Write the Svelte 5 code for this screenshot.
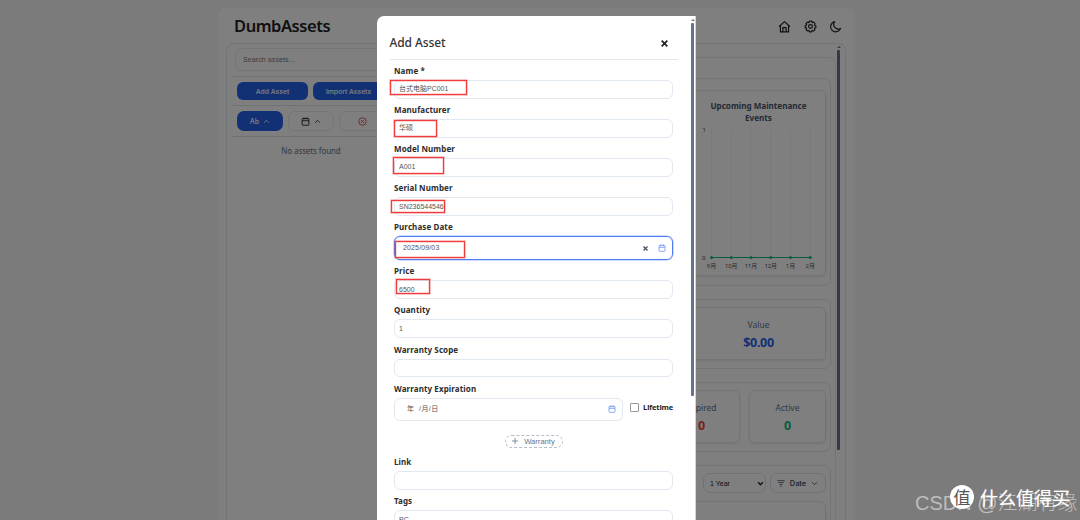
<script>
    const fields = [
        { label: 'Name *', value: '台式电脑PC001' },
        { label: 'Manufacturer', value: '华硕' },
        { label: 'Model Number', value: 'A001' },
        { label: 'Serial Number', value: 'SN236544546' },
        { label: 'Purchase Date', value: '2025/09/03', date: true },
        { label: 'Price', value: '6500' },
        { label: 'Quantity', value: '1' },
        { label: 'Warranty Scope', value: '' },
    ];

    // highlight frames lying over the form
    const marks = [
        [389.5, 80, 77.5, 15],
        [394, 120, 43, 16.5],
        [392.5, 156.5, 51.5, 17],
        [391, 200, 53.5, 13],
        [394.5, 240.5, 70.5, 17],
        [396, 279, 33.5, 15],
    ];

    const months = ['9月', '10月', '11月', '12月', '1月', '2月'];
    const chartX = (i) => 19.5 + i * 19.75;
</script>

{#snippet calendar(size)}
    <svg width={size} height={size} viewBox="0 0 24 24" fill="none" stroke="currentColor" stroke-width="2.4" stroke-linejoin="round">
        <rect x="3" y="4" width="18" height="18" rx="2" />
        <path d="M3 10h18M8 1v6M16 1v6" />
    </svg>
{/snippet}

{#snippet chevron(d, weight = 3)}
    <svg width="7" height="7" viewBox="0 0 24 24" fill="none" stroke="currentColor" stroke-width={weight}><path {d} /></svg>
{/snippet}

<div class="page">
    <div class="app">
        <header>
            <h1>DumbAssets</h1>
            <nav>
                <svg width="13" height="13" viewBox="0 0 24 24" fill="none" stroke="currentColor" stroke-width="2.2" stroke-linejoin="round">
                    <path d="M2 12 12 3l10 9M4.500 10v12h15V10M9 22v-8h6v8" />
                </svg>
                <svg width="13" height="13" viewBox="0 0 24 24" fill="none" stroke="currentColor" stroke-width="2.2" stroke-linejoin="round">
                    <path d="M10 2h4l1 2.600 2.700-.8 2.600 2.900-1 2.500L22 11v3l-2.600 1.300.8 2.700-2.900 2.500-2.500-1L13.500 22h-3l-1.300-2.500-2.700.8-2.700-2.700 1-2.600L2 13.500v-3l2.800-1.300-.9-2.800 2.700-2.600L9 4.800z" />
                    <circle cx="12" cy="12" r="3.500" />
                </svg>
                <svg width="13" height="13" viewBox="0 0 24 24" fill="none" stroke="currentColor" stroke-width="2.2" stroke-linejoin="round">
                    <path d="M10.500 3A9.500 9.500 0 1 0 21.500 15.500 8.500 8.500 0 0 1 10.500 3z" />
                </svg>
            </nav>
        </header>
        <div class="container">
            <aside>
                <div class="searchRow"><div class="search">Search assets...</div></div>
                <div class="buttons">
                    <button class="primary">Add Asset</button>
                    <button class="primary">Import Assets</button>
                </div>
                <div class="sorts">
                    <button class="sort active">Ab {@render chevron('M4 16l8-8 8 8')}</button>
                    <button class="sort">{@render calendar(9)} {@render chevron('M4 16l8-8 8 8')}</button>
                    <button class="sort warn">
                        <svg width="9" height="9" viewBox="0 0 24 24" fill="none" stroke="currentColor" stroke-width="2.400"><circle cx="12" cy="12" r="10" /><path d="M8 8l8 8M16 8l-8 8" /></svg>
                    </button>
                </div>
                <p class="empty">No assets found</p>
            </aside>
            <main>
                <div class="dashboard">
                    <section class="panel charts">
                        <div class="card chart">
                            <h3>Upcoming Maintenance Events</h3>
                            <svg width="133" height="146" viewBox="0 0 133 146">
                                {#each months as month, i}
                                    <path d="M{chartX(i)} 6V134" stroke="#f2f2f2" />
                                    <text x={chartX(i)} y="144" text-anchor="middle">{month}</text>
                                {/each}
                                <path d="M19 133.500H119" stroke="#10b981" stroke-width="1" />
                                {#each months as _, i}
                                    <circle cx={chartX(i)} cy="133.500" r="1.500" fill="#10b981" />
                                {/each}
                                <text x="10.500" y="8">1</text>
                                <text x="10" y="135.500">0</text>
                            </svg>
                        </div>
                    </section>
                    <section class="panel value">
                        <div class="card stat"><span>Value</span><b class="blue">$0.00</b></div>
                    </section>
                    <section class="panel status">
                        <div class="card stat"><span>Expired</span><b class="red">0</b></div>
                        <div class="card stat"><span>Active</span><b class="green">0</b></div>
                    </section>
                    <section class="panel events">
                        <div class="filters">
                            <div class="select">1 Year {@render chevron('M4 8l8 8 8-8', 5)}</div>
                            <div class="select date">
                                <svg width="8" height="8" viewBox="0 0 24 24" stroke="currentColor" stroke-width="2.500"><path d="M1 5h22M4 11h16M8 17h8M10 22h4" /></svg>
                                <strong>Date</strong>
                                {@render chevron('M4 8l8 8 8-8')}
                            </div>
                        </div>
                        <div class="card list"></div>
                    </section>
                </div>
                <div class="scroll"><i></i><b></b></div>
            </main>
        </div>
    </div>

    <div class="overlay"></div>

    <div class="modal">
        <div class="content">
            <div class="modalHead">
                <h2>Add Asset</h2>
                <svg width="7" height="7" viewBox="0 0 7 7" stroke="#222" stroke-width="1.700"><path d="M.7.7l5.600 5.600M6.300.7L.7 6.300" /></svg>
            </div>
            <form>
                {#each fields as field}
                    <div class="field" class:purchase={field.date}>
                        <span class="label">{field.label}</span>
                        <div class="input">
                            <span>{field.value}</span>
                            {#if field.date}
                                <span class="tools">
                                    <svg width="5" height="5" viewBox="0 0 7 7" stroke="#475569" stroke-width="1.900"><path d="M.7.7l5.600 5.600M6.300.7L.7 6.300" /></svg>
                                    {@render calendar(8)}
                                </span>
                            {/if}
                        </div>
                    </div>
                {/each}
                <div class="field expiration">
                    <span class="label">Warranty Expiration</span>
                    <div class="row">
                        <div class="input"><span>年&nbsp; /月/日</span><span class="tools">{@render calendar(8)}</span></div>
                        <div class="lifetime"><i></i>Lifetime</div>
                    </div>
                </div>
                <div class="add"><button><svg width="6" height="6" viewBox="0 0 6 6" stroke="currentColor" stroke-width=".8"><path d="M3 0v6M0 3h6" /></svg>Warranty</button></div>
                <div class="field"><span class="label">Link</span><div class="input"></div></div>
                <div class="field"><span class="label">Tags</span><div class="input"><span>PC</span></div></div>
            </form>
        </div>
        <div class="modalScroll"><i></i><b></b></div>
    </div>

    {#each marks as [x, y, w, h]}
        <div class="mark" style="left: {x}px; top: {y}px; width: {w}px; height: {h}px"></div>
    {/each}

    <div class="csdn">CSDN @江湖有缘</div>
    <div class="brand"><span class="logo">值</span><span>什么值得买</span></div>
</div>

<style>
    :global(body) {
        overflow: hidden;
    }

    .page {
        position: relative;
        width: 1080px;
        height: 520px;
        overflow: hidden;
        background: #f6f6f6;
        font-family: 'Noto Sans', 'Noto Sans CJK SC', sans-serif;
        color: #222;
    }

    .page * {
        box-sizing: border-box;
    }

    .app {
        width: 637px;
        height: 540px;
        margin: 8px 0 0 218px;
        padding: 0 8px;
        background: white;
        border-radius: 8px;
    }

    header {
        height: 35px;
        padding: 0 5px 0 8px;
        display: flex;
        justify-content: space-between;
        align-items: center;
    }

    h1 {
        margin: 0;
        font-size: 16.5px;
        font-weight: 600;
        letter-spacing: -0.45px;
    }

    nav {
        display: flex;
        gap: 12.5px;
        padding-top: 2px;
    }

    svg {
        display: block;
        flex: none;
    }

    .container {
        display: flex;
        width: 620px;
        height: 500px;
        border: 1px solid #e2e8f0;
        border-radius: 8px;
    }

    aside {
        width: 170px;
        padding: 0 5px;
        flex: none;
        overflow: hidden;
        font-family: Inter, sans-serif;
    }

    .searchRow {
        height: 33px;
        padding: 4px 0 0 3px;
        border-bottom: 1px solid #dfe3e8;
    }

    .search {
        width: 200px;
        height: 23px;
        padding-left: 7px;
        border: 1px solid #e7eaf0;
        border-radius: 7px;
        font-family: 'Liberation Sans', sans-serif;
        font-size: 7px;
        line-height: 21px;
        letter-spacing: 0.1px;
        color: #777;
    }

    .buttons,
    .sorts {
        display: flex;
        gap: 5px;
        padding: 5px 0 0 5px;
        height: 29px;
        border-bottom: 1px solid #dfe3e8;
    }

    button {
        flex: none;
        padding: 0;
        border: 0;
        font-family: Inter, sans-serif;
    }

    .primary {
        width: 71px;
        height: 18px;
        border-radius: 6px;
        background: #2563eb;
        color: white;
        font-size: 6.8px;
        font-weight: 500;
    }

    .sorts {
        height: 31px;
    }

    .sort {
        display: flex;
        align-items: center;
        justify-content: center;
        gap: 4px;
        width: 46px;
        height: 20px;
        border: 1px solid #e7eaf0;
        border-radius: 7px;
        background: white;
        color: #222;
        font-size: 7px;
        font-weight: 500;
    }

    .active {
        border: 0;
        background: #2563eb;
        color: white;
    }

    .warn {
        color: #ef4444;
    }

    .empty {
        margin: 8px 0 0 -2px;
        text-align: center;
        font-family: 'Noto Sans', sans-serif;
        font-size: 8px;
        line-height: 12px;
        letter-spacing: -0.1px;
        color: #64748b;
    }

    main {
        display: flex;
        flex: 1;
        padding-top: 2px;
    }

    .dashboard {
        width: 439px;
        height: 490px;
        margin-top: 11px;
        padding: 20px 4px 0 5px;
        border: 1px solid #e7eaf0;
        border-radius: 7px;
    }

    .panel {
        display: flex;
        justify-content: flex-end;
        gap: 9px;
        margin-bottom: 13px;
        padding: 11px 4px 0;
        border: 1px solid #e2e8f0;
        border-radius: 7px;
    }

    .card {
        border: 1px solid #e2e8f0;
        border-radius: 6px;
        box-shadow: 0 1px 3px rgba(0, 0, 0, 0.1);
    }

    .charts {
        height: 208px;
    }

    .chart {
        width: 135px;
        height: 186px;
    }

    h3 {
        height: 24px;
        margin: 9px 15px 0;
        font-size: 8.1px;
        line-height: 12px;
        text-align: center;
        color: #475569;
    }

    .chart text {
        font-family: Roboto, 'Noto Sans CJK SC', sans-serif;
        font-size: 6px;
        fill: #555;
    }

    .value,
    .status {
        height: 70px;
        padding-top: 7px;
    }

    .stat {
        display: flex;
        flex-direction: column;
        align-items: center;
        width: 77px;
        height: 53px;
        padding-top: 11px;
        font-size: 8.5px;
        line-height: 12px;
        color: #64748b;
    }

    .value .stat {
        width: 135px;
    }

    .stat b {
        margin-top: 4px;
        font-size: 12.5px;
        line-height: 16px;
        letter-spacing: -0.3px;
    }

    .blue { color: #2563eb; }
    .red { color: #ef4444; }
    .green { color: #10b981; }

    .events {
        display: block;
        height: 100px;
        padding-top: 7px;
    }

    .filters {
        display: flex;
        justify-content: flex-end;
        gap: 4px;
        margin-bottom: 8px;
    }

    .select {
        display: flex;
        align-items: center;
        justify-content: space-between;
        width: 63px;
        height: 20px;
        padding: 0 1px 0 6px;
        border: 1px solid #dfe3ea;
        border-radius: 7px;
        font-family: 'Liberation Sans', sans-serif;
        font-size: 7px;
    }

    .date {
        width: 56px;
        padding-right: 7px;
        color: #475569;
        font-family: Inter, sans-serif;
        font-size: 7.3px;
    }

    .date strong {
        font-weight: 600;
    }

    .list {
        height: 60px;
    }

    .scroll {
        width: 3px;
        margin-left: 1px;
    }

    .scroll i,
    .modalScroll i {
        display: block;
        width: 0;
        margin-bottom: 2px;
        border: 2px solid transparent;
        border-top: 0;
        border-bottom: 2px solid #64748b;
    }

    .scroll b {
        display: block;
        height: 400px;
        border-radius: 1px;
        background: #64748b;
    }

    .overlay {
        position: absolute;
        inset: 0;
        background: rgba(0, 0, 0, 0.5);
    }

    .modal {
        position: absolute;
        left: 377px;
        top: 16px;
        width: 319px;
        height: 520px;
        display: flex;
        justify-content: space-between;
        background: white;
        border-radius: 7px 0 0 0;
    }

    .content {
        width: 301px;
        padding-left: 12.5px;
    }

    .modalHead {
        display: flex;
        align-items: center;
        justify-content: space-between;
        height: 44px;
        padding: 11px 10px 0 0;
        border-bottom: 1px solid #e2e8f0;
    }

    h2 {
        margin: -2px 0 0;
        font-size: 12px;
        font-weight: 500;
        letter-spacing: -0.1px;
        color: #333;
    }

    form {
        padding: 5px 5px 0 4.5px;
    }

    .field {
        height: 39.1px;
    }

    .label {
        display: block;
        height: 15px;
        font-size: 8px;
        line-height: 12px;
        font-weight: 700;
        letter-spacing: 0.1px;
        color: #2c2c2c;
    }

    .input {
        display: flex;
        align-items: center;
        justify-content: space-between;
        height: 18.5px;
        padding: 0 6px 0 4px;
        border: 1px solid #e2e8f0;
        border-radius: 6px;
        font-family: 'Liberation Sans', 'Noto Sans CJK SC', sans-serif;
        font-size: 7px;
        line-height: 10px;
        color: #555;
    }

    .purchase {
        height: 44px;
    }

    .purchase .input {
        height: 24px;
        padding-left: 8px;
        border: 1.5px solid #4f7df0;
        box-shadow: 0 0 0 0.5px #9ab5f8;
        letter-spacing: 0.14px;
    }

    .tools {
        display: flex;
        align-items: center;
        gap: 10px;
        color: #6d93f4;
    }

    .expiration {
        height: 50px;
    }

    .row {
        display: flex;
        justify-content: space-between;
    }

    .expiration .input {
        width: 229px;
        height: 23px;
        padding-left: 12px;
        letter-spacing: 0.4px;
    }

    .lifetime {
        display: flex;
        align-items: center;
        height: 19px;
        font-size: 7.5px;
        font-weight: 700;
        letter-spacing: -0.15px;
    }

    .lifetime i {
        width: 9px;
        height: 9px;
        margin-right: 4px;
        border: 1px solid #999;
        border-radius: 1px;
    }

    .add {
        height: 24px;
        margin-top: -0.5px;
        text-align: center;
        line-height: 12px;
    }

    .add button {
        display: inline-flex;
        align-items: center;
        justify-content: center;
        gap: 6px;
        width: 58px;
        height: 13px;
        border: 1px dashed #b4bdca;
        border-radius: 7px;
        background: white;
        color: #64748b;
        font-family: 'Liberation Sans', sans-serif;
        font-size: 7.6px;
    }

    .modalScroll {
        width: 5px;
        padding-top: 3px;
        border-right: 1px solid #d5d5d5;
    }

    .modalScroll b {
        display: block;
        width: 3px;
        height: 373px;
        border-radius: 1px;
        background: #64748b;
    }

    .mark {
        position: absolute;
        border: 1px solid #f23c3c;
        box-shadow: 0 0 0 0.5px rgba(242, 60, 60, 0.6), inset 0 0 0 0.5px rgba(242, 60, 60, 0.4);
    }

    .csdn {
        position: absolute;
        left: 915px;
        top: 489px;
        font-family: 'Liberation Sans', 'Noto Sans CJK SC', sans-serif;
        font-size: 20px;
        font-weight: 300;
        line-height: 28px;
        white-space: nowrap;
        color: rgba(255, 255, 255, 0.5);
    }

    .brand {
        position: absolute;
        left: 950px;
        top: 485px;
        display: flex;
        align-items: center;
        gap: 6px;
        font-family: 'Noto Sans CJK SC', sans-serif;
        font-size: 18px;
        line-height: 24px;
        color: white;
        text-shadow: 0 0 1px rgba(255, 255, 255, 0.5);
        white-space: nowrap;
    }

    .logo {
        width: 24px;
        height: 24px;
        border-radius: 50%;
        background: white;
        color: #555;
        font-size: 17px;
        line-height: 23px;
        text-align: center;
        text-shadow: none;
    }
</style>
